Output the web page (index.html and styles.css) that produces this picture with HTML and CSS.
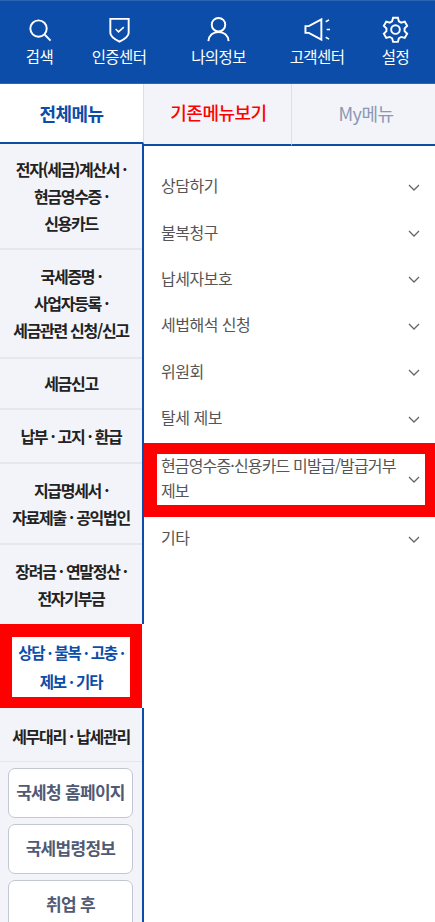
FILE: index.html
```html
<!DOCTYPE html>
<html lang="ko">
<head>
<meta charset="utf-8">
<title>전체메뉴</title>
<link rel="stylesheet" href="styles.css">
</head>
<body>
<header class="top">
  <a class="top-item t1"><svg viewBox="0 0 28 28" class="ico"><circle cx="13" cy="13" r="8.500"/><path d="M19.500 19.500l6 6"/></svg><span>검색</span></a>
  <a class="top-item t2"><svg viewBox="0 0 28 28" class="ico"><path d="M4.500 3h19v14.500c0 4-5.500 7-9.500 9-4-2-9.500-5-9.500-9z"/><path d="M10 13.500l3 3 5.500-5" class="thin"/></svg><span>인증센터</span></a>
  <a class="top-item t3"><svg viewBox="0 0 28 28" class="ico"><circle cx="14" cy="9" r="7"/><path d="M3.500 26c.5-6 5-9.500 10.500-9.500S24 20 24.500 26"/></svg><span>나의정보</span></a>
  <a class="top-item t4"><svg viewBox="0 0 28 28" class="ico"><path d="M1.500 10.500h3.500l13-7v21l-13-7H1.500z"/><path d="M22.500 6l3.500-2M23.500 14H27M22.500 22l3.500 2" class="thin"/></svg><span>고객센터</span></a>
  <a class="top-item t5"><svg viewBox="0 0 28 28" class="ico"><circle cx="14" cy="14" r="4.500"/><path d="M11.500 1.800h5l1 3.700 2.400 1.400 3.700-1 2.500 4.300-2.700 2.700v2.800l2.700 2.700-2.500 4.300-3.700-1-2.400 1.400-1 3.700h-5l-1-3.700-2.400-1.400-3.700 1-2.500-4.300 2.700-2.700v-2.800L1.900 10.200l2.500-4.300 3.700 1 2.400-1.400z"/></svg><span>설정</span></a>
</header>
<nav class="tabs">
  <a class="tab tab-all">전체메뉴</a>
  <a class="tab tab-old">기존메뉴보기</a>
  <a class="tab tab-my">My메뉴</a>
</nav>
<main class="body">
  <aside class="side">
    <a class="cat h104">전자(세금)계산서 ·<br>현금영수증 ·<br>신용카드</a>
    <a class="cat h108">국세증명 ·<br>사업자등록 ·<br>세금관련 신청/신고</a>
    <a class="cat h50">세금신고</a>
    <a class="cat h53">납부 · 고지 · 환급</a>
    <a class="cat h81">지급명세서 ·<br>자료제출 · 공익법인</a>
    <a class="cat h78">장려금 · 연말정산 ·<br>전자기부금</a>
    <a class="cat cat-on"><span class="cat-on-in">상담 · 불복 · 고충 ·<br>제보 · 기타</span></a>
    <a class="cat h53 nb">세무대리 · 납세관리</a>
    <div class="links">
      <a class="link">국세청 홈페이지</a>
      <a class="link">국세법령정보</a>
      <a class="link">취업 후</a>
    </div>
  </aside>
  <section class="list">
    <a class="row"><span>상담하기</span><svg viewBox="0 0 12 8" class="chev"><path d="M1 1l5 5 5-5"/></svg></a>
    <a class="row"><span>불복청구</span><svg viewBox="0 0 12 8" class="chev"><path d="M1 1l5 5 5-5"/></svg></a>
    <a class="row"><span>납세자보호</span><svg viewBox="0 0 12 8" class="chev"><path d="M1 1l5 5 5-5"/></svg></a>
    <a class="row"><span>세법해석 신청</span><svg viewBox="0 0 12 8" class="chev"><path d="M1 1l5 5 5-5"/></svg></a>
    <a class="row"><span>위원회</span><svg viewBox="0 0 12 8" class="chev"><path d="M1 1l5 5 5-5"/></svg></a>
    <a class="row"><span>탈세 제보</span><svg viewBox="0 0 12 8" class="chev"><path d="M1 1l5 5 5-5"/></svg></a>
    <a class="row-on"><span>현금영수증·신용카드 미발급/발급거부<br>제보</span><svg viewBox="0 0 12 8" class="chev"><path d="M1 1l5 5 5-5"/></svg></a>
    <a class="row"><span>기타</span><svg viewBox="0 0 12 8" class="chev"><path d="M1 1l5 5 5-5"/></svg></a>
  </section>
</main>
</body>
</html>
```
FILE: styles.css
```css
* { box-sizing: border-box; }
html, body { margin: 0; padding: 0; }
body {
  width: 435px; height: 922px; overflow: hidden; background: #fff;
  font-family: "Noto Sans CJK KR", "Noto Sans", sans-serif;
}
.top {
  height: 84px; background: #0b4da8; border-top: 1px solid #2a62b4; border-bottom: 1px solid #2a66bb;
  display: flex; color: #fff;
}
.top-item { display: flex; flex-direction: column; align-items: center; padding-top: 15px; font-size: 15.500px; letter-spacing: -0.600px; line-height: 22px; }
.t1 { width: 79px; }
.t2 { width: 80px; }
.t3 { width: 119px; }
.t4 { width: 78px; }
.t5 { width: 79px; }
.ico { width: 27px; height: 27px; fill: none; stroke: #fff; stroke-width: 2; margin-bottom: 2px; flex: none; }
.ico .thin { stroke-width: 1.600; }
.tabs { display: flex; height: 62px; align-items: flex-start; }
.tab { display: flex; align-items: center; justify-content: center; font-size: 18px; letter-spacing: -0.500px; }
.tab-all { width: 144px; height: 60px; background: #fff; color: #0b4da8; font-weight: 700; border-right: 1px solid #dcdfe8; border-bottom: 2px solid #0b4da8; }
.tab-old { width: 148px; height: 62px; padding: 0 0 4px 2px; background: #f3f4f9; color: #f00; font-weight: 500; border-right: 1px solid #dcdfe8; border-bottom: 2px solid #0b4da8; }
.tab-my { width: 143px; height: 62px; padding: 0 0 2px 5px; background: #f3f4f9; color: #8b97b3; font-weight: 400; border-bottom: 2px solid #0b4da8; }
.body { display: flex; height: 778px; margin-top: -2px; }
.side { width: 144px; flex: none; background: #f3f4f9; border-right: 2px solid #0b4da8; padding-top: 1px; }
.cat {
  display: flex; align-items: center; justify-content: center; text-align: center;
  font-size: 16px; font-weight: 700; letter-spacing: -1.300px; line-height: 27px; color: #222;
  border-bottom: 2px solid #e6e7ec;
}
.h104 { height: 105px; }
.h108 { height: 109px; }
.h50 { height: 51px; }
.h53 { height: 54px; }
.h81 { height: 81px; }
.h78 { height: 79px; border-bottom: 0; }
.nb { border-bottom: 1px solid #e6e7ec; padding-top: 3px; }
.cat-on { height: 84px; margin-right: -2px; background: #f00; padding: 13px 12px 11px 12px; border: 0; border-right: 2px solid #fff; }
.cat-on-in { flex: 1; align-self: stretch; background: #fff; color: #0b4da8; display: flex; align-items: center; justify-content: center; font-size: 15.500px; line-height: 29px; letter-spacing: -1.200px; }
.links { display: flex; flex-direction: column; gap: 6px; padding: 6px 9px 0 8px; }
.link {
  height: 50px; flex: none; background: #fff; border: 1px solid #c3c7d2; border-radius: 7px;
  display: flex; align-items: center; justify-content: center; padding-bottom: 3px;
  font-size: 17px; font-weight: 700; letter-spacing: -0.700px; color: #505a75;
}
.list { flex: 1; padding-top: 18px; }
.row, .row-on { display: flex; align-items: center; justify-content: space-between; font-size: 16px; letter-spacing: -0.500px; color: #555; }
.row { height: 46.400px; padding: 0 15px 0 17px; }
.row .chev { margin-top: 5px; }
.row-on {
  height: 74px; margin-top: 3px; background: #fff;
  border: solid #f00; border-width: 11px 10px 12px 13px; line-height: 25px; padding: 0 5px 3px 4px;
  letter-spacing: -0.850px; white-space: nowrap;
}
.row-on .chev { margin-top: 3px; }
.row-on + .row { margin-top: -3px; height: 46px; }
.chev { width: 12px; height: 8px; fill: none; stroke: #666; stroke-width: 1.300; flex: none; }
```
